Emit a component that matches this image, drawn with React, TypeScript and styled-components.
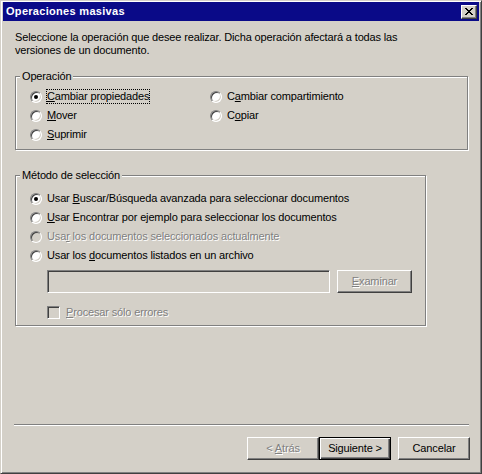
import React from 'react';
import styled, { createGlobalStyle, css } from 'styled-components';

const GlobalStyle = createGlobalStyle`
  html, body {
    margin: 0;
    padding: 0;
    background: #d4d0c8;
  }
  body {
    font-family: "Liberation Sans", Arial, sans-serif;
    font-size: 11px;
  }
`;

const Window = styled.div`
  box-sizing: border-box;
  width: 482px;
  height: 474px;
  display: flex;
  flex-direction: column;
  background: #d4d0c8;
  border: 1px solid;
  border-color: #d4d0c8 #404040 #404040 #d4d0c8;
  box-shadow: inset 1px 1px 0 #fff, inset -1px -1px 0 #808080;
  padding: 1px 2px;
  color: #000;
  font-family: "Liberation Sans", Arial, sans-serif;
  font-size: 11px;
  line-height: 13px;
  letter-spacing: -0.15px;
`;

const TitleBar = styled.div`
  height: 19px;
  display: flex;
  align-items: center;
  padding: 0 2px 0 3px;
  background: #0a0a88;
  flex: none;
`;

const TitleText = styled.span`
  color: #fff;
  font-weight: bold;
  font-size: 11px;
  letter-spacing: 0.3px;
`;

const CloseButton = styled.button`
  box-sizing: border-box;
  margin-left: auto;
  width: 16px;
  height: 14px;
  padding: 0;
  display: flex;
  align-items: center;
  justify-content: center;
  background: #d4d0c8;
  border: 1px solid;
  border-color: #fff #404040 #404040 #fff;
  box-shadow: inset -1px -1px 0 #808080, inset 1px 1px 0 #d4d0c8;
`;

const Body = styled.div`
  flex: 1;
  display: flex;
  flex-direction: column;
  padding: 10px 10px 0 12px;
`;

const Intro = styled.p`
  margin: 0;
  white-space: nowrap;
`;

const GroupBox = styled.div<{ $width: number }>`
  position: relative;
  box-sizing: border-box;
  width: ${p => p.$width}px;
  border: 1px solid #808080;
  box-shadow: inset 1px 1px 0 #fff, 1px 1px 0 #fff;
`;

const Legend = styled.span`
  position: absolute;
  top: -7px;
  left: 4px;
  padding: 0 2px;
  background: #d4d0c8;
`;

const OperationGrid = styled(GroupBox)`
  margin-top: 19px;
  display: grid;
  grid-template-columns: 180px 1fr;
  grid-auto-rows: 19px;
  padding: 10px 0 5px 14px;
`;

const SelectionBox = styled(GroupBox)`
  margin-top: 25px;
  display: flex;
  flex-direction: column;
  padding: 13px 0 3px 14px;
`;

const Option = styled.label`
  height: 19px;
  display: flex;
  align-items: center;
  gap: 4px;
`;

const RadioMark = styled.span<{ $checked?: boolean; $disabled?: boolean }>`
  position: relative;
  box-sizing: border-box;
  flex: none;
  width: 12px;
  height: 12px;
  border-radius: 50%;
  border: 1px solid;
  border-color: #808080 #fff #fff #808080;
  box-shadow: inset 1px 1px 0 #404040, inset -1px -1px 0 #d4d0c8;
  background: ${p => (p.$disabled ? '#d4d0c8' : '#fff')};
  ${p =>
    p.$checked &&
    css`
      &::after {
        content: '';
        position: absolute;
        left: 3px;
        top: 3px;
        width: 4px;
        height: 4px;
        border-radius: 50%;
        background: #000;
      }
    `}
`;

const disabledText = css`
  color: #808080;
  text-shadow: 1px 1px 0 #fff;
`;

const OptionText = styled.span<{ $focused?: boolean; $disabled?: boolean }>`
  border: 1px dotted ${p => (p.$focused ? '#000' : 'transparent')};
  white-space: nowrap;
  ${p => p.$disabled && disabledText}
`;

const FileRow = styled.div`
  display: flex;
  gap: 7px;
  margin: 5px 0 0 17px;
`;

const TextField = styled.div`
  box-sizing: border-box;
  width: 283px;
  height: 23px;
  border: 1px solid;
  border-color: #808080 #fff #fff #808080;
  box-shadow: inset 1px 1px 0 #404040, inset -1px -1px 0 #d4d0c8;
  background: #d4d0c8;
`;

const Button = styled.button<{ $default?: boolean; $width?: number }>`
  box-sizing: border-box;
  width: ${p => p.$width ?? 72}px;
  height: 23px;
  padding: 0;
  font: inherit;
  letter-spacing: inherit;
  color: #000;
  background: #d4d0c8;
  border: 1px solid;
  ${p =>
    p.$default
      ? css`
          border-color: #000;
          box-shadow: inset 1px 1px 0 #fff, inset -1px -1px 0 #404040, inset -2px -2px 0 #808080;
        `
      : css`
          border-color: #fff #404040 #404040 #fff;
          box-shadow: inset -1px -1px 0 #808080, inset 1px 1px 0 #d4d0c8;
        `}
  &:disabled {
    ${disabledText}
  }
`;

const CheckRow = styled.label`
  height: 19px;
  display: flex;
  align-items: center;
  gap: 5px;
  margin: 10px 0 0 17px;
`;

const CheckMark = styled.span`
  box-sizing: border-box;
  flex: none;
  width: 13px;
  height: 13px;
  border: 1px solid;
  border-color: #808080 #fff #fff #808080;
  box-shadow: inset 1px 1px 0 #404040, inset -1px -1px 0 #d4d0c8;
  background: #d4d0c8;
`;

const Footer = styled.div`
  flex: none;
  display: flex;
  flex-direction: column;
`;

const Separator = styled.div`
  margin-left: 11px;
  width: 455px;
  height: 1px;
  background: #808080;
  border-bottom: 1px solid #fff;
`;

const ButtonRow = styled.div`
  display: flex;
  justify-content: flex-end;
  padding: 11px 9px 12px 0;
`;

const CancelButton = styled(Button)`
  margin-left: 7px;
`;

const CloseGlyph = () => (
  <svg width="8" height="7" viewBox="0 0 8 7" shapeRendering="crispEdges">
    <path
      d="M0 0h2v1h-2z M6 0h2v1h-2z M1 1h2v1h-2z M5 1h2v1h-2z M2 2h4v1h-4z M3 3h2v1h-2z M2 4h4v1h-4z M1 5h2v1h-2z M5 5h2v1h-2z M0 6h2v1h-2z M6 6h2v1h-2z"
      fill="#000"
    />
  </svg>
);

type RadioProps = {
  children: React.ReactNode;
  checked?: boolean;
  disabled?: boolean;
  focused?: boolean;
};

const Radio = ({ children, checked, disabled, focused }: RadioProps) => (
  <Option>
    <RadioMark $checked={checked} $disabled={disabled} />
    <OptionText $focused={focused} $disabled={disabled}>
      {children}
    </OptionText>
  </Option>
);

export default function App() {
  return (
    <>
      <GlobalStyle />
      <Window>
        <TitleBar>
          <TitleText>Operaciones masivas</TitleText>
          <CloseButton aria-label="Cerrar">
            <CloseGlyph />
          </CloseButton>
        </TitleBar>

        <Body>
          <Intro>
            Seleccione la operación que desee realizar. Dicha operación afectará a todas las
            <br />
            versiones de un documento.
          </Intro>

          <OperationGrid $width={453}>
            <Legend>Operación</Legend>
            <Radio checked focused>
              <u>C</u>ambiar propiedades
            </Radio>
            <Radio>
              C<u>a</u>mbiar compartimiento
            </Radio>
            <Radio>
              <u>M</u>over
            </Radio>
            <Radio>
              C<u>o</u>piar
            </Radio>
            <Radio>
              <u>S</u>uprimir
            </Radio>
          </OperationGrid>

          <SelectionBox $width={411}>
            <Legend>Método de selección</Legend>
            <Radio checked>
              Usar <u>B</u>uscar/Búsqueda avanzada para seleccionar documentos
            </Radio>
            <Radio>
              <u>U</u>sar Encontrar por ejemplo para seleccionar los documentos
            </Radio>
            <Radio disabled>
              Usa<u>r</u> los documentos seleccionados actualmente
            </Radio>
            <Radio>
              Usar los <u>d</u>ocumentos listados en un archivo
            </Radio>
            <FileRow>
              <TextField />
              <Button $width={75} disabled>
                <u>E</u>xaminar
              </Button>
            </FileRow>
            <CheckRow>
              <CheckMark />
              <OptionText $disabled>
                <u>P</u>rocesar sólo errores
              </OptionText>
            </CheckRow>
          </SelectionBox>
        </Body>

        <Footer>
          <Separator />
          <ButtonRow>
            <Button disabled>
              &lt; <u>A</u>trás
            </Button>
            <Button $default>Siguiente &gt;</Button>
            <CancelButton>Cancelar</CancelButton>
          </ButtonRow>
        </Footer>
      </Window>
    </>
  );
}
